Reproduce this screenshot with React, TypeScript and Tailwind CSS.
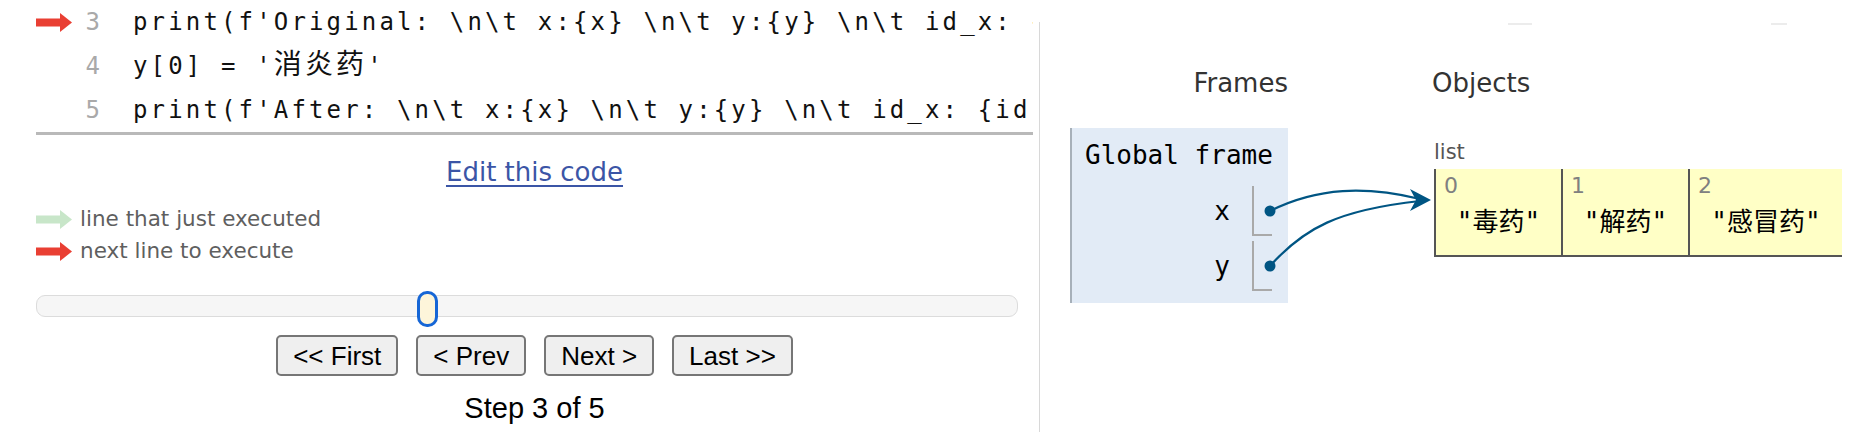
import React from 'react';

const codeLines = [
  { n: 3, text: "print(f'Original: \\n\\t x:{x} \\n\\t y:{y} \\n\\t id_x: {id(x)} \\n\\t id_y: {id(y)}')", arrow: true },
  { n: 4, text: "y[0] = '", cjk: '消炎药', tail: "'" },
  { n: 5, text: "print(f'After: \\n\\t x:{x} \\n\\t y:{y} \\n\\t id_x: {id(x)} \\n\\t id_y: {id(y)}')" },
];

const items = [
  { i: 0, v: '"毒药"', w: 'w-[127px]' },
  { i: 1, v: '"解药"', w: 'w-[127px]' },
  { i: 2, v: '"感冒药"', w: 'w-[154px]' },
];

function Arrow({ color }: { color: string }) {
  return (
    <svg width="36" height="19" viewBox="0 0 36 19">
      <rect x="0" y="5.5" width="25" height="8" fill={color} />
      <polygon points="24,0 36,9.5 24,19" fill={color} />
    </svg>
  );
}

export default function App() {
  return (
    <div className="relative flex w-[1862px] h-[432px] overflow-hidden bg-white">
      {/* left pane: code + controls */}
      <div className="w-[1039px] shrink-0 pl-[36px] pr-[6px] flex flex-col">
        <div className="border-b-[3px] border-[#b9b9b9] overflow-hidden" style={{ fontFamily: '"DejaVu Sans Mono", "Noto Sans CJK SC", monospace' }}>
          {codeLines.map(l => (
            <div key={l.n} className="flex items-center h-[44px] text-[24px] whitespace-pre">
              <div className="w-[37px] shrink-0 flex items-center">{l.arrow && <Arrow color="#e93f33" />}</div>
              <div className="w-[27px] shrink-0 text-right text-[#a9a9a9]">{l.n}</div>
              <div className="ml-[33px] tracking-[3.15px] text-[#111]">
                {l.text}
                {l.cjk && <span className="text-[28px] leading-none" style={{ fontFamily: '"Noto Sans CJK SC", sans-serif' }}>{l.cjk}</span>}
                {l.tail}
              </div>
            </div>
          ))}
        </div>

        <div className="mt-[22px] text-center leading-[31px] text-[26px]" style={{ fontFamily: '"DejaVu Sans", Verdana, sans-serif' }}>
          <span className="text-[#3b55a6] underline underline-offset-[4px]">Edit this code</span>
        </div>

        <div className="mt-[15px] text-[21.5px] text-[#5f5f5f]" style={{ fontFamily: '"DejaVu Sans", Verdana, sans-serif' }}>
          <div className="flex items-center gap-[8px] h-[32px]"><Arrow color="#c8e6c9" /><span>line that just executed</span></div>
          <div className="flex items-center gap-[8px] h-[32px]"><Arrow color="#e93f33" /><span>next line to execute</span></div>
        </div>

        <div className="relative mt-[24px] h-[36px] w-[982px]">
          <div className="mt-[4px] h-[22px] rounded-[9px] border border-[#dcdcdc] bg-[#f6f6f6]" />
          <div className="absolute left-[381px] top-0 w-[21px] h-[36px] rounded-[10px] border-[3px] border-[#1666d6] bg-[#fdf5da]" />
        </div>

        <div className="mt-[8px] flex justify-center gap-[18px] text-[26px]" style={{ fontFamily: '"Liberation Sans", Arial, sans-serif' }}>
          {['<< First', '< Prev', 'Next >', 'Last >>'].map(b => (
            <button key={b} className="h-[41px] px-[15px] rounded-[5px] border-2 border-[#767676] bg-[#efefef] text-black leading-none">{b}</button>
          ))}
        </div>

        <div className="mt-[16px] text-center text-[29px] leading-[33px] text-black" style={{ fontFamily: '"Liberation Sans", Arial, sans-serif' }}>
          Step 3 of 5
        </div>
      </div>

      {/* right pane: frames + objects */}
      <div className="flex-1 mt-[22px] border-l border-[#d8d8d8] pt-[45px] flex">
        <div className="ml-[30px] w-[218px] flex flex-col">
          <div className="text-right text-[26px] leading-[32px] text-[#333]" style={{ fontFamily: '"DejaVu Sans", Verdana, sans-serif' }}>Frames</div>
          <div className="mt-[29px] bg-[#e2ebf6] border-l-2 border-[#a7b0b9] pt-[12px] pb-[12px] pr-[16px]" style={{ fontFamily: '"DejaVu Sans Mono", monospace' }}>
            <div className="pl-[13px] text-[26px] leading-[30px] text-black whitespace-pre">Global frame</div>
            <div className="mt-[16px] flex flex-col gap-[5px]">
              {['x', 'y'].map(v => (
                <div key={v} className="flex items-center justify-end h-[50px]">
                  <span className="text-[26px] leading-none text-black">{v}</span>
                  <div className="ml-[22px] w-[20px] h-[50px] border-l-2 border-b-2 border-[#a9a9a9]" />
                </div>
              ))}
            </div>
          </div>
        </div>

        <div className="ml-[146px] flex flex-col" style={{ fontFamily: '"DejaVu Sans", Verdana, sans-serif' }}>
          <div className="-ml-[2px] text-[26px] leading-[32px] text-[#333]">Objects</div>
          <div className="mt-[41px] text-[21px] leading-[25px] text-[#555]">list</div>
          <div className="mt-[4px] flex border-b-2 border-[#555] bg-[#ffffc6]">
            {items.map(it => (
              <div key={it.i} className={`${it.w} h-[86px] border-l-2 border-[#555] pt-[4px] flex flex-col`}>
                <div className="pl-[8px] text-[22px] leading-[26px] text-[#808080]">{it.i}</div>
                <div className="mt-[7px] text-center text-[26px] leading-[32px] text-black" style={{ fontFamily: '"DejaVu Sans Mono", "Noto Sans CJK SC", monospace' }}>{it.v}</div>
              </div>
            ))}
          </div>
        </div>
      </div>

      {/* pointer arrows drawn over both panes */}
      <svg className="absolute inset-0 pointer-events-none" width="1862" height="432" viewBox="0 0 1862 432">
        <line x1="1508" y1="24" x2="1532" y2="24" stroke="#e6e6e6" strokeWidth="1.5" />
        <line x1="1771" y1="24" x2="1787" y2="24" stroke="#e6e6e6" strokeWidth="1.5" />
        <path d="M1270 211 C 1318 187, 1366 186, 1420 199" fill="none" stroke="#005583" strokeWidth="2.2" />
        <path d="M1270 266 C 1304 228, 1338 210, 1420 201" fill="none" stroke="#005583" strokeWidth="2.2" />
        <path d="M1431 200 L1410 189 L1416 200 L1410 211 Z" fill="#005583" />
        <circle cx="1270" cy="211" r="5.5" fill="#005583" />
        <circle cx="1270" cy="266" r="5.5" fill="#005583" />
      </svg>
    </div>
  );
}
